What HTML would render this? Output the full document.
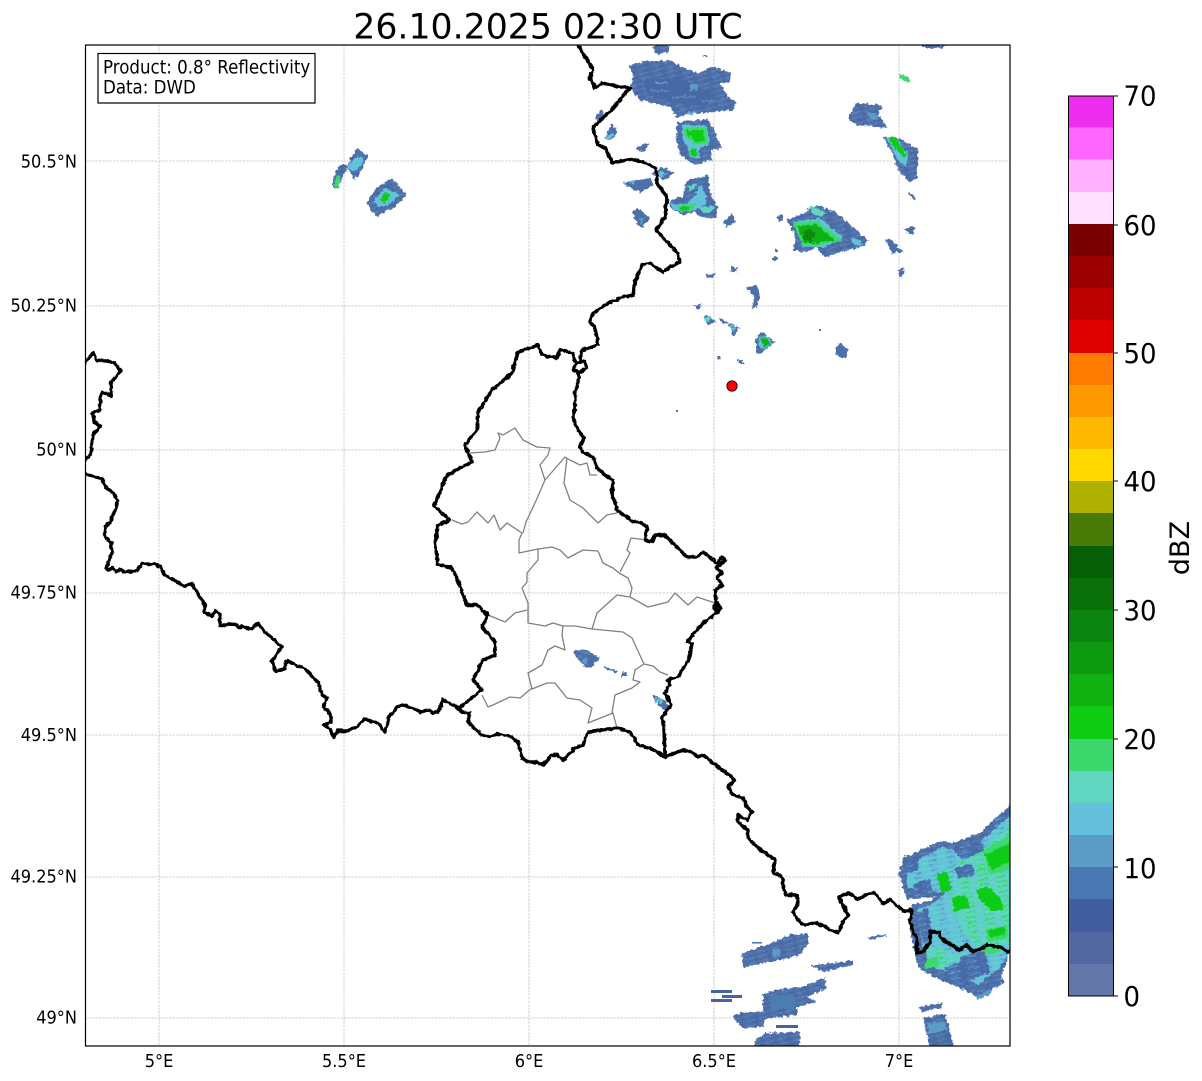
<!DOCTYPE html>
<html><head><meta charset="utf-8"><title>Radar</title>
<style>html,body{margin:0;padding:0;background:#fff}svg{display:block}text{font-family:"DejaVu Sans",sans-serif;fill:#000}</style>
</head><body>
<svg width="1202" height="1081" viewBox="0 0 1202 1081" xmlns="http://www.w3.org/2000/svg">
<defs>
<clipPath id="plot"><rect x="85" y="45" width="925" height="1001"/></clipPath>
<filter id="rag" filterUnits="userSpaceOnUse" x="80" y="40" width="935" height="1010"><feTurbulence type="fractalNoise" baseFrequency="0.3" numOctaves="2" seed="4" result="n"/><feDisplacementMap in="SourceGraphic" in2="n" scale="5" xChannelSelector="R" yChannelSelector="G"/></filter>
<filter id="wig" filterUnits="userSpaceOnUse" x="80" y="40" width="935" height="1010"><feTurbulence type="fractalNoise" baseFrequency="0.22" numOctaves="2" seed="9" result="n"/><feDisplacementMap in="SourceGraphic" in2="n" scale="3.5" xChannelSelector="R" yChannelSelector="G"/></filter>
<pattern id="b" width="14" height="5" patternUnits="userSpaceOnUse" patternTransform="rotate(-14)"><rect width="14" height="5" fill="#4d6fa8"/><rect y="1" width="9" height="1.5" fill="#5a7fb4"/><rect x="6" y="3.5" width="8" height="1.2" fill="#4664a3"/></pattern>
<pattern id="b2" width="16" height="5" patternUnits="userSpaceOnUse" patternTransform="rotate(14)"><rect width="16" height="5" fill="#4f6fa8"/><rect y="1" width="10" height="1.5" fill="#5a84b8"/><rect x="8" y="3.5" width="8" height="1.2" fill="#4664a3"/></pattern>
<pattern id="c" width="18" height="5" patternUnits="userSpaceOnUse" patternTransform="rotate(-10)"><rect width="18" height="5" fill="#66c2dc"/><rect y="1" width="12" height="1.4" fill="#5fd6c2"/><rect x="9" y="3.4" width="8" height="1.1" fill="#5a9cc6"/></pattern>
<pattern id="t" width="18" height="5" patternUnits="userSpaceOnUse" patternTransform="rotate(-10)"><rect width="18" height="5" fill="#5fd6c2"/><rect y="1" width="10" height="1.6" fill="#3cd86e"/><rect x="8" y="3.4" width="10" height="1.2" fill="#66c2dc"/></pattern>
<pattern id="d" width="20" height="6" patternUnits="userSpaceOnUse" patternTransform="rotate(-14)"><rect width="20" height="6" fill="#4a6aa8"/><rect y="1.5" width="14" height="1.6" fill="#4d7bb2"/><rect x="5" y="4" width="12" height="1.2" fill="#5a9cc6"/></pattern>
</defs>

<!-- title -->
<text x="548" y="38.5" font-size="34.7" text-anchor="middle">26.10.2025 02:30 UTC</text>

<!-- gridlines -->
<g stroke="#c4c4c4" stroke-width="0.8" stroke-dasharray="2.5 1" fill="none">
<path d="M159 45V1046M344 45V1046M529 45V1046M714 45V1046M899 45V1046"/>
<path d="M85 161H1010M85 306H1010M85 450H1010M85 593H1010M85 735H1010M85 877H1010M85 1018H1010"/>
</g>

<g clip-path="url(#plot)">
<g filter="url(#rag)">
<!-- radar: left blobs -->
<polygon fill="url(#b)" points="333,177 340,165 347,165 357,148 368,155 363,168 355,180 347,168 338,188 333,188"/>
<polygon fill="#63c2da" points="347,166 358,156 364,160 358,170 352,171"/>
<polygon fill="#3cd86e" points="334,186 337,175 341,177 338,188"/>
<polygon fill="url(#b)" points="367,202 377,187 392,178 407,195 393,208 377,217 372,212"/>
<polygon fill="#63c2da" points="374,200 385,188 400,194 390,204 378,208"/>
<polygon fill="#10cc16" points="379,200 385,192 390,195 385,204"/>

<!-- radar: top middle -->
<polygon fill="url(#b)" points="653,45 670,45 668,52 658,55 654,52"/>
<polygon fill="url(#b)" points="628,65 643,62 670,60 683,68 698,73 713,67 732,73 730,82 720,83 728,97 737,103 733,110 710,112 687,115 677,118 670,107 640,100 630,88 633,75"/>
<polygon fill="#4a67a6" points="645,80 680,78 715,95 705,106 670,102 645,92"/>
<rect x="690" y="84" width="8" height="6" fill="#5a9cc6"/><rect x="655" y="82" width="14" height="2" fill="#5a9cc6"/><rect x="688" y="112" width="8" height="2" fill="#63c2da"/><rect x="650" y="90" width="20" height="2" fill="#5a84b8"/><rect x="672" y="96" width="24" height="2" fill="#5a84b8"/><rect x="702" y="100" width="14" height="2" fill="#5a84b8"/>
<rect x="702" y="55" width="6" height="2" fill="#4d6fa8"/>
<polygon fill="url(#b)" points="677,122 708,119 714,130 718,140 722,148 712,150 712,160 695,165 680,155 676,140"/>
<polygon fill="#63c2da" points="682,125 706,125 710,142 700,150 688,147 682,136"/>
<polygon fill="#3cd86e" points="684,128 706,127 708,143 695,145 684,136"/>
<polygon fill="#10cc16" points="687,130 703,130 705,141 696,142 687,134"/>
<polygon fill="#63c2da" points="688,146 699,146 700,158 690,158"/>
<polygon fill="#10cc16" points="690,149 697,149 697,156 691,156"/>
<polygon fill="url(#b)" points="670,200 683,197 687,180 708,175 710,193 718,208 717,217 703,218 695,212 683,215 670,208"/>
<polygon fill="#63c2da" points="672,203 685,205 695,195 700,185 707,195 705,205 695,210 682,212 672,208"/>
<polygon fill="#3cd86e" points="676,205 690,205 697,202 692,210 681,211"/>
<polygon fill="#10cc16" points="679,207 690,206 688,210 682,211"/>
<polygon fill="#5fd6c2" points="700,207 714,206 712,212 703,213"/>
<polygon fill="#5fd6c2" points="687,186 697,184 695,189 689,190"/>
<polygon fill="#4d6fa8" points="595,117 602,110 605,118 598,123"/>
<polygon fill="#4d6fa8" points="605,138 612,123 618,133 610,140"/>
<polygon fill="#63c2da" points="605,137 612,133 616,134 608,140"/>
<polygon fill="#4d6fa8" points="635,148 648,143 645,152 640,151"/>
<polygon fill="#4d6fa8" points="623,183 650,178 653,185 640,193 628,187"/>
<polygon fill="#63c2da" points="628,182 635,180 634,184"/>
<polygon fill="#4d6fa8" points="652,173 662,167 675,173 663,180"/>
<polygon fill="#63c2da" points="657,173 664,171 667,175 660,177"/>
<polygon fill="#4d6fa8" points="632,213 637,208 650,217 642,228 636,222"/>
<polygon fill="#5a9cc6" points="638,218 645,217 642,224"/>
<polygon fill="#4d6fa8" points="723,223 733,213 735,222 727,227"/>
<polygon fill="#4d6fa8" points="705,275 715,273 714,278 708,278"/>
<rect x="730" y="267" width="7" height="5" fill="#4d6fa8"/>
<polygon fill="#4d6fa8" points="693,305 702,305 698,309"/>
<polygon fill="#4d6fa8" points="703,317 707,315 716,322 708,325"/>
<rect x="705" y="317" width="5" height="5" fill="#5fd6c2"/>
<polygon fill="#4d6fa8" points="718,317 728,322 723,325"/>
<polygon fill="#4d6fa8" points="728,323 740,328 733,336"/>
<polygon fill="#63c2da" points="730,325 737,328 733,332"/>
<rect x="738" y="360" width="5" height="3" fill="#4d6fa8"/><rect x="717" y="356" width="3" height="3" fill="#4d6fa8"/>

<!-- radar: top right -->
<polygon fill="#4d6fa8" points="920,45 948,45 942,48 925,48"/>
<polygon fill="#3cd86e" points="899,74 904,75 910,80 907,82 899,78"/>
<polygon fill="url(#b)" points="847,118 857,103 882,105 878,115 888,128 877,127 857,125"/>
<polygon fill="#5a9cc6" points="866,112 876,114 878,120 870,119"/>
<polygon fill="url(#b)" points="883,137 897,137 918,150 917,178 910,183 897,168 892,152"/>
<polygon fill="#63c2da" points="886,137 898,139 908,155 906,168 898,160"/>
<polygon fill="#10cc16" points="889,137 895,137 907,155 903,157 892,145"/>
<polygon fill="#4d6fa8" points="908,193 910,192 916,198 914,200"/>
<polygon fill="url(#b)" points="787,220 803,213 817,205 837,213 868,240 862,247 840,252 825,258 817,248 803,252 793,250 795,237"/>
<polygon fill="#63c2da" points="793,222 820,218 843,238 823,248 803,247"/>
<polygon fill="#5fd6c2" points="810,206 825,212 822,217 812,214"/>
<polygon fill="#3cd86e" points="793,223 817,221 842,240 820,245 803,246"/>
<polygon fill="#10b212" points="797,226 815,224 835,240 818,243 804,243"/>
<polygon fill="#0c8a10" points="803,232 810,228 815,235 810,243 805,240"/>
<polygon fill="#63c2da" points="850,237 862,241 862,246 853,243"/>
<rect x="778" y="216" width="5" height="5" fill="#4d6fa8"/><rect x="774" y="249" width="4" height="3" fill="#4d6fa8"/><rect x="772" y="257" width="6" height="4" fill="#4d6fa8"/>
<polygon fill="#4d6fa8" points="903,228 906,229 912,226 915,228 913,235 907,233"/>
<polygon fill="#4d6fa8" points="885,240 890,238 903,252 901,254 896,252 892,253"/>
<polygon fill="#4d6fa8" points="898,270 903,268 904,274 900,278"/>
<polygon fill="#4d6fa8" points="747,288 757,285 760,297 757,308 752,308 754,296"/>
<polygon fill="#4d6fa8" points="755,338 762,332 775,342 765,350 757,355"/>
<polygon fill="#63c2da" points="758,337 768,336 773,343 764,349 760,348"/>
<polygon fill="#10b212" points="760,339 767,338 771,344 764,347"/>
<polygon fill="#4d6fa8" points="835,353 838,343 848,348 847,357 838,357"/>

<!-- radar: Luxembourg -->
<polygon fill="url(#b2)" points="573,652 583,649 600,657 592,667 585,668 577,658"/>
<circle cx="585" cy="661" r="2.5" fill="#5a9cc6"/>
<polygon fill="#4d6fa8" points="603,666 618,671 617,673 603,668"/>
<rect x="622" y="672" width="5" height="4" fill="#4d6fa8"/>
<polygon fill="#4d6fa8" points="652,695 660,697 670,706 665,711 658,705"/>
<rect x="656" y="698" width="6" height="5" fill="#63c2da"/>

<!-- radar: south east -->
<polygon fill="url(#b)" points="900,870 903,858 920,850 940,841 953,843 980,833 1010,805 1010,943 1007,960 1000,980 977,997 960,988 933,977 918,968 910,933 912,905 932,900 934,897 907,899 898,873"/>
<polygon fill="url(#c)" points="906,866 925,856 942,847 955,850 982,840 1010,815 1010,950 1000,968 978,985 960,975 935,968 922,945 917,910 936,902 945,893 925,890 908,888"/>
<polygon fill="url(#t)" points="955,866 985,848 1010,825 1010,945 985,950 965,935 950,905"/>
<polygon fill="url(#t)" points="925,945 945,950 960,958 940,968 928,965"/>
<polygon fill="url(#d)" points="913,885 930,878 933,892 915,898"/>
<polygon fill="url(#d)" points="905,862 918,858 919,870 907,873"/>
<polygon fill="url(#d)" points="953,850 980,838 985,850 962,860"/>
<polygon fill="url(#d)" points="960,957 985,950 990,972 965,982"/>
<polygon fill="url(#d)" points="916,912 928,908 932,935 924,945 918,925"/>
<polygon fill="url(#d)" points="985,827 1010,807 1010,815 992,832"/>
<polygon fill="url(#d)" points="945,968 965,960 970,985 952,983"/>
<polygon fill="url(#d)" points="955,868 972,864 975,876 958,878"/>
<polygon fill="#3cd86e" points="983,850 1010,835 1010,870 990,875"/>
<polygon fill="#10cc16" points="985,855 1010,843 1010,862 992,870"/>
<polygon fill="#10cc16" points="937,874 947,871 952,890 942,893"/>
<polygon fill="#10cc16" points="976,890 988,886 1000,898 1004,910 992,911 980,900"/>
<polygon fill="#10cc16" points="952,897 965,895 970,907 954,912"/>
<polygon fill="#3cd86e" points="985,930 1007,925 1008,938 988,942"/>
<polygon fill="#10cc16" points="988,931 1004,927 1005,934 990,938"/>
<polygon fill="#3cd86e" points="926,960 937,956 939,966 924,969"/>
<polygon fill="#3cd86e" points="984,948 1005,945 1000,952 985,955"/>
<polygon fill="url(#d)" points="977,990 1003,978 1005,982 980,996"/>
<polygon fill="#5a9cc6" points="976,997 990,989 992,993 978,1000"/>
<polygon fill="url(#b)" points="742,953 752,950 770,943 790,935 808,933 809,943 800,955 780,960 743,967"/>
<polygon fill="#5a9cc6" points="772,950 780,948 781,955 773,957"/>
<polygon fill="url(#b)" points="812,965 853,961 853,965 825,972 813,968"/>
<polygon fill="#4d6fa8" points="868,937 887,934 887,936 869,940"/>
<polygon fill="url(#b)" points="763,995 775,990 803,987 825,977 826,988 807,997 817,1002 797,1007 797,1015 777,1017 763,1020"/>
<rect x="770" y="995" width="25" height="14" fill="#4d7bb2"/>
<polygon fill="url(#b)" points="732,1017 743,1012 763,1012 765,1027 743,1028"/>
<polygon fill="url(#b)" points="755,1040 765,1033 800,1032 800,1050 755,1050"/>
<polygon fill="#4d6fa8" points="920,1007 942,1003 942,1007 921,1012"/>
<polygon fill="url(#b)" points="923,1018 945,1014 955,1050 930,1050"/>
<polygon fill="#5a9cc6" points="926,1024 944,1021 947,1030 929,1034"/>
</g>
<rect x="676" y="410" width="2" height="2" fill="#4d6fa8"/>
<rect x="819" y="329" width="2" height="2" fill="#4d6fa8"/>
<rect x="752" y="942" width="10" height="1.5" fill="#4d6fa8"/>
<g fill="#4664a3"><rect x="711" y="990" width="21" height="3"/><rect x="722" y="995" width="20" height="3"/><rect x="711" y="999" width="21" height="3"/><rect x="776" y="1025" width="22" height="3"/></g>

<!-- canton lines -->
<g fill="none" stroke="#808080" stroke-width="1.3" stroke-linejoin="round">
<path d="M470 453L485 452L495 450L500 438L498 433L503 435L515 428L523 440L537 447L550 448L548 455L540 465L545 480L535 503L526 522L523 533"/>
<path d="M452 520L462 524L468 522L477 512L488 523L494 515L500 530L507 523L522 533L519 540L519 553L538 549L552 547L560 550L568 558L583 550L598 551L603 563L613 568L619 573L628 578L632 588L630 597"/>
<path d="M545 480L565 457L570 460L580 465L587 463L590 475L597 475"/>
<path d="M567 458L564 483L570 500L583 508L598 523L607 515L617 513"/>
<path d="M620 572L630 553L627 550L631 538L647 540"/>
<path d="M538 549L538 560L527 573L527 582L522 588L528 603L528 623L545 626L553 623L563 626L575 626L592 629L597 613L617 595L630 597L648 607L668 602L675 593L688 605L697 597L715 603"/>
<path d="M488 615L505 622L515 613L527 610"/>
<path d="M563 626L562 635L565 650L555 646L548 650L542 665L528 673L532 689L547 683L555 683L567 698L580 700L592 708L588 723L613 713L617 728"/>
<path d="M592 629L623 632L632 638L644 664L635 670L633 680L640 682L632 688L615 695L612 713"/>
<path d="M644 664L653 666L660 672L668 675"/>
<path d="M482 695L488 707L493 705L510 697L520 698L532 688"/>
</g>

<!-- borders -->
<g fill="none" stroke="#000" stroke-width="3.4" stroke-linejoin="round" stroke-linecap="round" filter="url(#wig)">
<path d="M85 363L93 353L97 360L113 362L121 371L111 382L111 397L107 393L102 393L100 399L100 410L92 413L95 422L100 426L93 435L91 453L86 459"/>
<path d="M85 474L102 479L106 487L115 495L117 500L116 508L110 522L105 528L105 537L111 542L112 553L106 568L108 570L112 568L117 571L121 570L125 572L135 571L138 569L142 564L156 564L160 567L165 575L184 586L192 584L205 605L204 612L212 616L215 611L220 614L220 626L232 624L237 625L238 627L245 627L251 629L258 623L263 630L282 647L277 653L272 661L276 672L285 668L287 661L305 669L318 682L322 695L327 698L323 706L331 715L331 722L324 725L330 729L333 737L338 731L347 731L357 727L364 719L378 723L385 732L388 723L388 718L397 707L403 705L415 709L420 712L428 710L433 713L438 712L443 700L459 708L463 713L470 713L468 722L482 735L490 737L497 734L510 736L518 742L522 758L528 762L537 762L543 765L552 755L558 755L563 760L575 748L583 745L588 732L617 728L630 732L638 745L650 748L665 757L683 750L692 752L698 757L703 755L722 770L735 780L728 787L733 795L743 798L747 807L752 812L747 820L738 815L738 822L748 830L748 838L758 848L775 860L773 872L782 877L785 895L797 895L798 903L793 912L802 925L817 923L838 933L843 922L848 915L843 905L839 897L848 893L858 899L870 893L875 893L883 904L890 899L903 911L912 910L910 922L917 940L917 953L923 952L930 942L930 932L940 932L940 937L948 943L960 950L967 945L973 952L988 945L1000 947L1008 952L1012 950"/>
<path d="M665 757L664 730L662 717L671 705L665 693L670 685L668 680L678 677L690 657L692 643L687 642L703 623L717 613L713 607L717 603L721 608L717 613L715 590L722 585L717 577L722 573L716 568L725 560L722 557L717 563L703 552L697 557L687 557L665 535L655 535L652 542L645 540L647 527L640 522L633 522L617 510L612 493L613 480L605 475L597 468L593 457L583 452L580 447L584 438L578 430L573 418L575 407L575 393L579 377L578 372L573 370L577 362L585 362L587 368L580 372L578 372"/>
<path d="M459 708L482 690L473 680L483 660L495 655L495 642L482 627L488 615L477 605L467 605L455 573L450 567L438 565L435 543L438 525L450 520L434 506L447 475L460 468L472 462L465 445L477 430L478 412L492 390L512 373L518 352L538 345L542 355L557 358L560 350L573 353L575 362"/>
<path d="M580 362L582 350L598 345L595 327L590 322L593 313L605 305L623 297L633 295L635 282L642 265L650 263L663 272L665 270L680 262L678 253L667 242L656 230L665 217L667 197L657 183L656 168L643 162L632 159L613 163L605 148L598 145L593 128L613 108L630 88L620 87L602 83L595 88L590 77L593 70L583 53L578 45"/>
</g>

<!-- marker -->
<circle cx="732" cy="386" r="5.2" fill="#ff0000" stroke="#000" stroke-width="0.8"/>
</g>

<!-- frame -->
<rect x="85.5" y="45" width="924.5" height="1001" fill="none" stroke="#000" stroke-width="1.2"/>

<!-- annotation box -->
<rect x="98" y="53.5" width="217" height="49.5" fill="#fff" stroke="#000" stroke-width="1.2"/>
<text font-size="16.67" transform="translate(103 73.5) scale(1 1.14)">Product: 0.8° Reflectivity</text>
<text font-size="16.67" transform="translate(103 93.5) scale(1 1.14)">Data: DWD</text>

<!-- axis labels -->
<g font-size="16.2" text-anchor="end">
<text transform="translate(77 167.5) scale(1 1.12)">50.5°N</text>
<text transform="translate(77 311.5) scale(1 1.12)">50.25°N</text>
<text transform="translate(77 455.5) scale(1 1.12)">50°N</text>
<text transform="translate(77 598.5) scale(1 1.12)">49.75°N</text>
<text transform="translate(77 741) scale(1 1.12)">49.5°N</text>
<text transform="translate(77 882.5) scale(1 1.12)">49.25°N</text>
<text transform="translate(77 1023.5) scale(1 1.12)">49°N</text>
</g>
<g font-size="16.2" text-anchor="middle">
<text transform="translate(159 1067) scale(1 1.12)">5°E</text>
<text transform="translate(344 1067) scale(1 1.12)">5.5°E</text>
<text transform="translate(529 1067) scale(1 1.12)">6°E</text>
<text transform="translate(714 1067) scale(1 1.12)">6.5°E</text>
<text transform="translate(899 1067) scale(1 1.12)">7°E</text>
</g>

<!-- colorbar -->
<g shape-rendering="crispEdges">
<rect x="1068" y="96" width="45" height="33" fill="#ee2eee"/>
<rect x="1068" y="127.5" width="45" height="33" fill="#ff66ff"/>
<rect x="1068" y="159.5" width="45" height="33" fill="#ffb0ff"/>
<rect x="1068" y="192" width="45" height="33" fill="#ffe0ff"/>
<rect x="1068" y="224" width="45" height="33" fill="#780000"/>
<rect x="1068" y="256" width="45" height="33" fill="#9c0000"/>
<rect x="1068" y="288" width="45" height="33" fill="#bd0000"/>
<rect x="1068" y="320" width="45" height="33" fill="#e00000"/>
<rect x="1068" y="353" width="45" height="33" fill="#ff7a00"/>
<rect x="1068" y="385" width="45" height="33" fill="#ff9900"/>
<rect x="1068" y="417" width="45" height="33" fill="#ffb800"/>
<rect x="1068" y="449" width="45" height="33" fill="#ffd800"/>
<rect x="1068" y="481" width="45" height="33" fill="#b0b000"/>
<rect x="1068" y="513" width="45" height="33" fill="#4a7a08"/>
<rect x="1068" y="546" width="45" height="33" fill="#065f06"/>
<rect x="1068" y="578" width="45" height="33" fill="#0a710a"/>
<rect x="1068" y="610" width="45" height="33" fill="#0c8410"/>
<rect x="1068" y="642" width="45" height="33" fill="#0e9a10"/>
<rect x="1068" y="674" width="45" height="33" fill="#10b212"/>
<rect x="1068" y="706" width="45" height="33" fill="#10cc14"/>
<rect x="1068" y="739" width="45" height="33" fill="#3cd86e"/>
<rect x="1068" y="771" width="45" height="33" fill="#60d6c0"/>
<rect x="1068" y="803" width="45" height="33" fill="#64c0dc"/>
<rect x="1068" y="835" width="45" height="33" fill="#5a9cc6"/>
<rect x="1068" y="867" width="45" height="33" fill="#4a78b2"/>
<rect x="1068" y="899" width="45" height="33" fill="#425ea0"/>
<rect x="1068" y="932" width="45" height="33" fill="#5268a0"/>
<rect x="1068" y="964" width="45" height="32" fill="#6476a8"/>
</g>
<rect x="1068.5" y="96" width="45" height="900" fill="none" stroke="#000" stroke-width="1"/>
<path d="M1113 96h5M1113 225h5M1113 353h5M1113 481h5M1113 610h5M1113 739h5M1113 867h5M1113 996h5" stroke="#000" stroke-width="1" fill="none"/>
<g font-size="26">
<text transform="translate(1123.5 105.5) scale(1 1.07)">70</text>
<text transform="translate(1123.5 235) scale(1 1.07)">60</text>
<text transform="translate(1123.5 363) scale(1 1.07)">50</text>
<text transform="translate(1123.5 491) scale(1 1.07)">40</text>
<text transform="translate(1123.5 620) scale(1 1.07)">30</text>
<text transform="translate(1123.5 749) scale(1 1.07)">20</text>
<text transform="translate(1123.5 878) scale(1 1.07)">10</text>
<text transform="translate(1123.5 1006) scale(1 1.07)">0</text>
</g>
<text font-size="27" text-anchor="middle" transform="translate(1189 548) rotate(-90)">dBZ</text>
</svg>
</body></html>
